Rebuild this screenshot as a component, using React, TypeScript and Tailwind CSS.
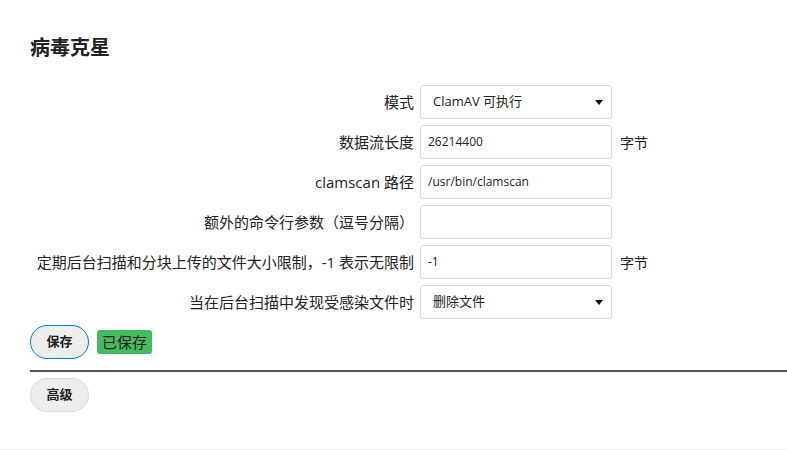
import React from 'react'

const font = { fontFamily: '"Open Sans", "Noto Sans CJK SC", sans-serif' }

function Caret() {
  return (
    <svg width="8" height="5" viewBox="0 0 8 5" className="shrink-0">
      <path d="M0 0 L8 0 L4 5 Z" fill="#111" />
    </svg>
  )
}

function Select({ value }: { value: string }) {
  return (
    <div className="h-[34px] w-[192px] my-[3px] flex items-center justify-between pl-[12px] pr-[8px] border border-[#dbdbdb] rounded-[3px] bg-white text-[13px] text-[#222]">
      <span>{value}</span>
      <Caret />
    </div>
  )
}

function Input({ value }: { value: string }) {
  return (
    <div className="h-[34px] w-[192px] my-[3px] flex items-center px-[7px] border border-[#dbdbdb] rounded-[3px] bg-white text-[12px] text-[#222]">
      {value}
    </div>
  )
}

const rows: Array<{ label: string; kind: 'select' | 'input'; value: string; unit?: string }> = [
  { label: '模式', kind: 'select', value: 'ClamAV 可执行' },
  { label: '数据流长度', kind: 'input', value: '26214400', unit: '字节' },
  { label: 'clamscan 路径', kind: 'input', value: '/usr/bin/clamscan' },
  { label: '额外的命令行参数（逗号分隔）', kind: 'input', value: '' },
  { label: '定期后台扫描和分块上传的文件大小限制，-1 表示无限制', kind: 'input', value: '-1', unit: '字节' },
  { label: '当在后台扫描中发现受感染文件时', kind: 'select', value: '删除文件' },
]

export default function App() {
  return (
    <div style={font} className="w-[787px] h-[450px] bg-white text-[#222] overflow-hidden">
      <div className="h-[450px] pl-[30px] pt-[33px] border-b border-[#ededed]">
        <h2 className="text-[20px] leading-[30px] font-bold mb-[19px]">病毒克星</h2>

        <div className="grid grid-cols-[384px_192px_auto] gap-x-[6px] items-center">
          {rows.map((r) => (
            <React.Fragment key={r.label}>
              <label className="text-right text-[15px] whitespace-nowrap">{r.label}</label>
              {r.kind === 'select' ? <Select value={r.value} /> : <Input value={r.value} />}
              <span className="ml-[2px] text-[14px]">{r.unit ?? ''}</span>
            </React.Fragment>
          ))}
        </div>

        <div className="flex items-center gap-[8px] mt-[3px]">
          <button className="h-[34px] w-[59px] rounded-full border border-[#0082c9] bg-[#ededed] text-[13px] font-bold text-[#222]">
            保存
          </button>
          <span className="h-[24px] px-[5px] flex items-center rounded-[3px] bg-[#46ba61] text-[15px] text-[#222]">
            已保存
          </span>
        </div>

        <div className="mt-[11px] h-[2px] bg-[#555]" />

        <button className="mt-[6px] h-[34px] w-[59px] rounded-full border border-[#dbdbdb] bg-[#ededed] text-[13px] font-bold text-[#222]">
          高级
        </button>
      </div>
    </div>
  )
}
